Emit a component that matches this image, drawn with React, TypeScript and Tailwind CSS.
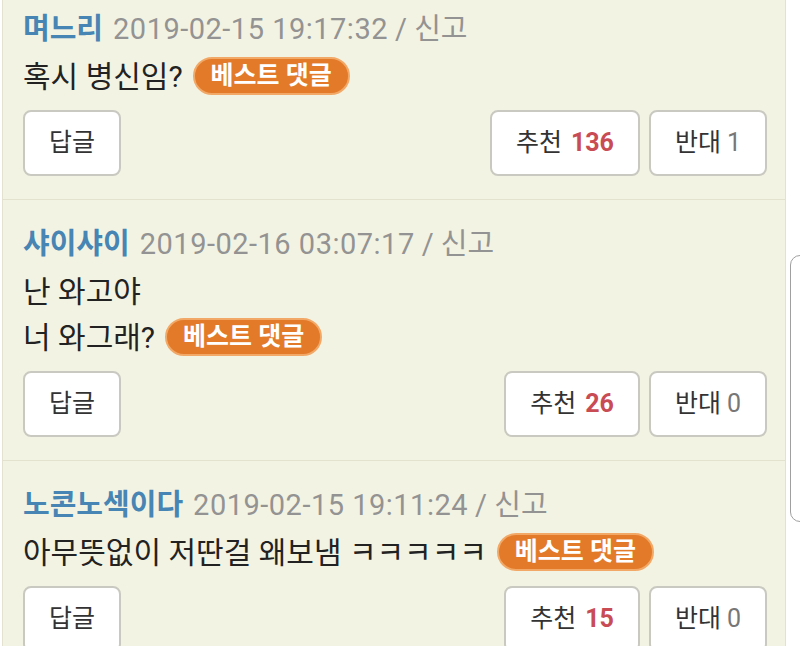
type Comment = {
  name: string;
  date: string;
  lines: string[];
  up: number;
  down: number;
};

const comments: Comment[] = [
  { name: "며느리", date: "2019-02-15 19:17:32", lines: ["혹시 병신임?"], up: 136, down: 1 },
  { name: "샤이샤이", date: "2019-02-16 03:07:17", lines: ["난 와고야", "너 와그래?"], up: 26, down: 0 },
  { name: "노콘노섹이다", date: "2019-02-15 19:11:24", lines: ["아무뜻없이 저딴걸 왜보냄 ㅋㅋㅋㅋㅋ"], up: 15, down: 0 },
];

const BestBadge = () => (
  <span className="ml-[10px] inline-flex h-[38px] w-[157px] items-center justify-center rounded-full border-2 border-[#f2a968] bg-[#e27a2a] text-[25px] font-bold text-white">
    베스트 댓글
  </span>
);

const Btn = ({ children }: { children: React.ReactNode }) => (
  <button className="flex h-[66px] items-center rounded-[8px] border-2 border-[#c9c9c1] bg-white px-[24px] text-[25px] text-[#333]">
    {children}
  </button>
);

const CommentItem = ({ c }: { c: Comment }) => (
  <div className="border-b border-[#e2e2cf] pt-[22px] pb-[23px] pl-[20px] pr-[18px]">
    <div className="flex h-[46px] items-center whitespace-nowrap">
      <span className="text-[29px] font-bold text-[#4685b4]">{c.name}</span>
      <span className="ml-[10px] text-[29px] tracking-[0.5px] text-[#939393]">{c.date}</span>
      <span className="ml-[7px] text-[29px] text-[#939393]">/ 신고</span>
    </div>
    {c.lines.map((line, i) => (
      <div key={i} className="flex h-[46px] items-center whitespace-nowrap text-[30px] text-[#222]">
        <span>{line}</span>
        {i === c.lines.length - 1 && <BestBadge />}
      </div>
    ))}
    <div className="mt-[11px] flex items-center">
      <Btn>답글</Btn>
      <div className="ml-auto flex gap-[9px]">
        <Btn>
          추천 <span className="ml-[9px] font-bold text-[#c94b53]">{c.up}</span>
        </Btn>
        <Btn>
          반대 <span className="ml-[6px] text-[#777]">{c.down}</span>
        </Btn>
      </div>
    </div>
  </div>
);

export default function App() {
  return (
    <div className="relative h-[646px] w-[800px] overflow-hidden bg-white font-['Roboto','Noto_Sans_CJK_KR',sans-serif]">
      <div className="ml-[2px] -mt-[15px] w-[784px] border-x border-[#e2e2cf] bg-[#f3f3e3]">
        {comments.map((c) => (
          <CommentItem key={c.name} c={c} />
        ))}
      </div>
      <div className="absolute left-[790px] top-[255px] h-[267px] w-[20px] rounded-l-[10px] border border-[#a0a0a0] bg-white" />
    </div>
  );
}
